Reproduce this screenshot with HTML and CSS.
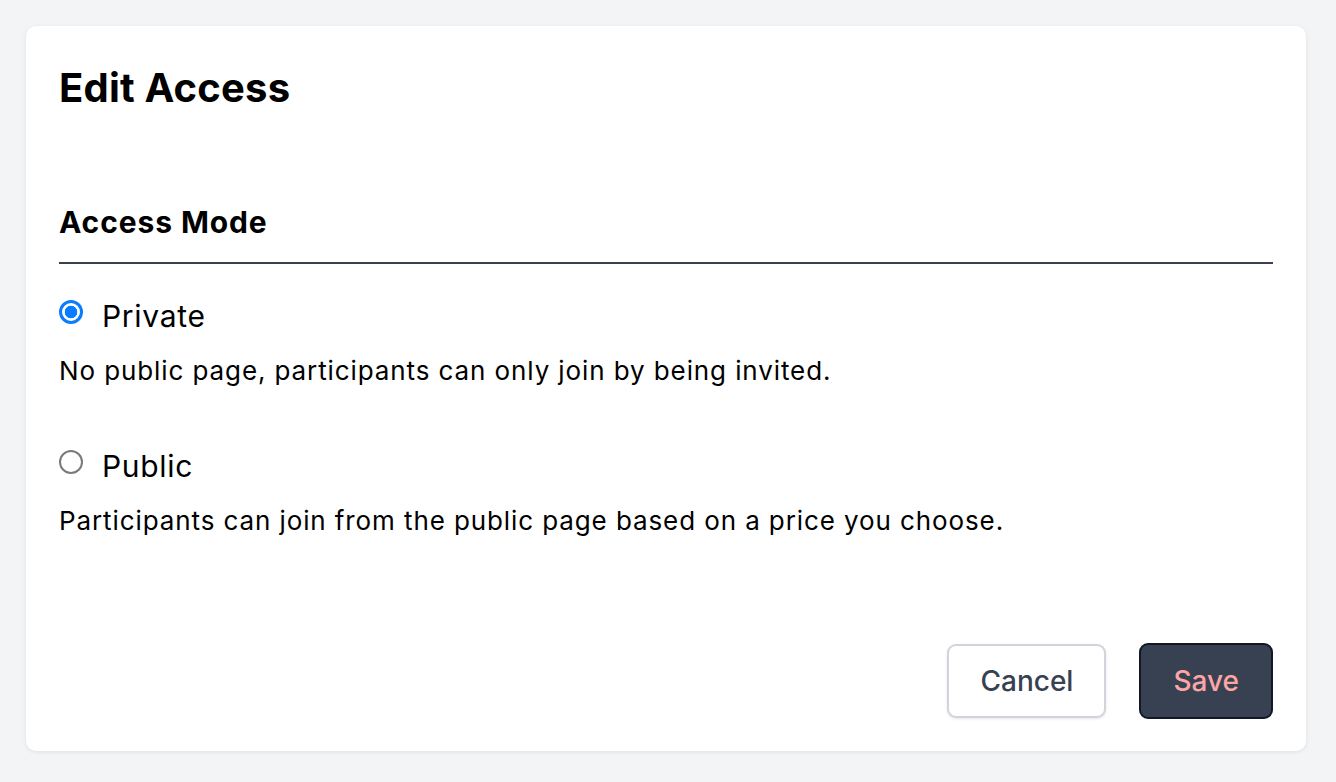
FILE: index.html
```html
<!DOCTYPE html>
<html lang="en">
<head>
    <meta charset="UTF-8">
    <meta name="viewport" content="width=device-width, initial-scale=1.0">
    <title>Edit Access</title>
    <link rel="stylesheet" href="styles.css">
</head>
<body>
    <div class="card">
        <h1>Edit Access</h1>
        <h2 class="section-title">Access Mode</h2>

        <div class="option">
            <label class="option-row">
                <input type="radio" name="mode" value="private" checked>
                <span>Private</span>
            </label>
            <p class="option-desc">No public page, participants can only join by being invited.</p>
        </div>

        <div class="option">
            <label class="option-row">
                <input type="radio" name="mode" value="public">
                <span>Public</span>
            </label>
            <p class="option-desc">Participants can join from the public page based on a price you choose.</p>
        </div>

        <div class="actions">
            <button type="button" class="btn btn-cancel">Cancel</button>
            <button type="submit" class="btn btn-save">Save</button>
        </div>
    </div>
</body>
</html>
```

FILE: styles.css
```css
body {
    font-family: Inter, "Noto Sans", sans-serif;
    margin: 0;
    padding: 26px 30px 31px 26px;
    background-color: #f3f4f6;
    color: #000;
}
.card {
    display: flex;
    flex-direction: column;
    height: 725px;
    box-sizing: border-box;
    padding: 38px 33px 32px 33px;
    background-color: white;
    border-radius: 10px;
    box-shadow: 0 1px 4px rgba(0, 0, 0, 0.08);
}
h1 {
    margin: 0;
    font-size: 40px;
    line-height: 48px;
    font-weight: 700;
    letter-spacing: 0.2px;
}
.section-title {
    margin: 92px 0 0 0;
    padding-bottom: 22px;
    font-size: 30px;
    line-height: 36px;
    font-weight: 700;
    letter-spacing: 0.9px;
    border-bottom: 2px solid #374151;
}
.option {
    margin-top: 34px;
}
.option + .option {
    margin-top: 62px;
}
.option-row {
    display: flex;
    align-items: flex-start;
    gap: 19px;
    font-size: 30px;
    line-height: 36px;
    letter-spacing: 0.7px;
    cursor: pointer;
}
input[type="radio"] {
    appearance: none;
    width: 24px;
    height: 24px;
    margin: 2px 0 0 0;
    border: 2px solid #7a7a7a;
    border-radius: 50%;
    box-sizing: border-box;
    background: white;
}
input[type="radio"]:checked {
    border: 3px solid #0a7cff;
    background: radial-gradient(circle, #0a7cff 0 6px, white 6.6px);
}
.option-desc {
    margin: 22px 0 0 0;
    font-size: 26px;
    line-height: 30px;
    letter-spacing: 0.9px;
}
.actions {
    margin-top: auto;
    display: flex;
    justify-content: flex-end;
    align-items: center;
    gap: 33px;
}
.btn {
    font-family: Inter, "Noto Sans", sans-serif;
    font-size: 28px;
    font-weight: 500;
    border-radius: 9px;
    cursor: pointer;
}
.btn-cancel {
    height: 74px;
    padding: 0 31px;
    color: #374151;
    background-color: white;
    border: 2px solid #d1d5db;
    box-shadow: 0 1px 3px rgba(0, 0, 0, 0.1);
}
.btn-save {
    height: 76px;
    padding: 0 32px;
    color: #fca5a5;
    background-color: #374151;
    border: 2px solid #111827;
}
```
